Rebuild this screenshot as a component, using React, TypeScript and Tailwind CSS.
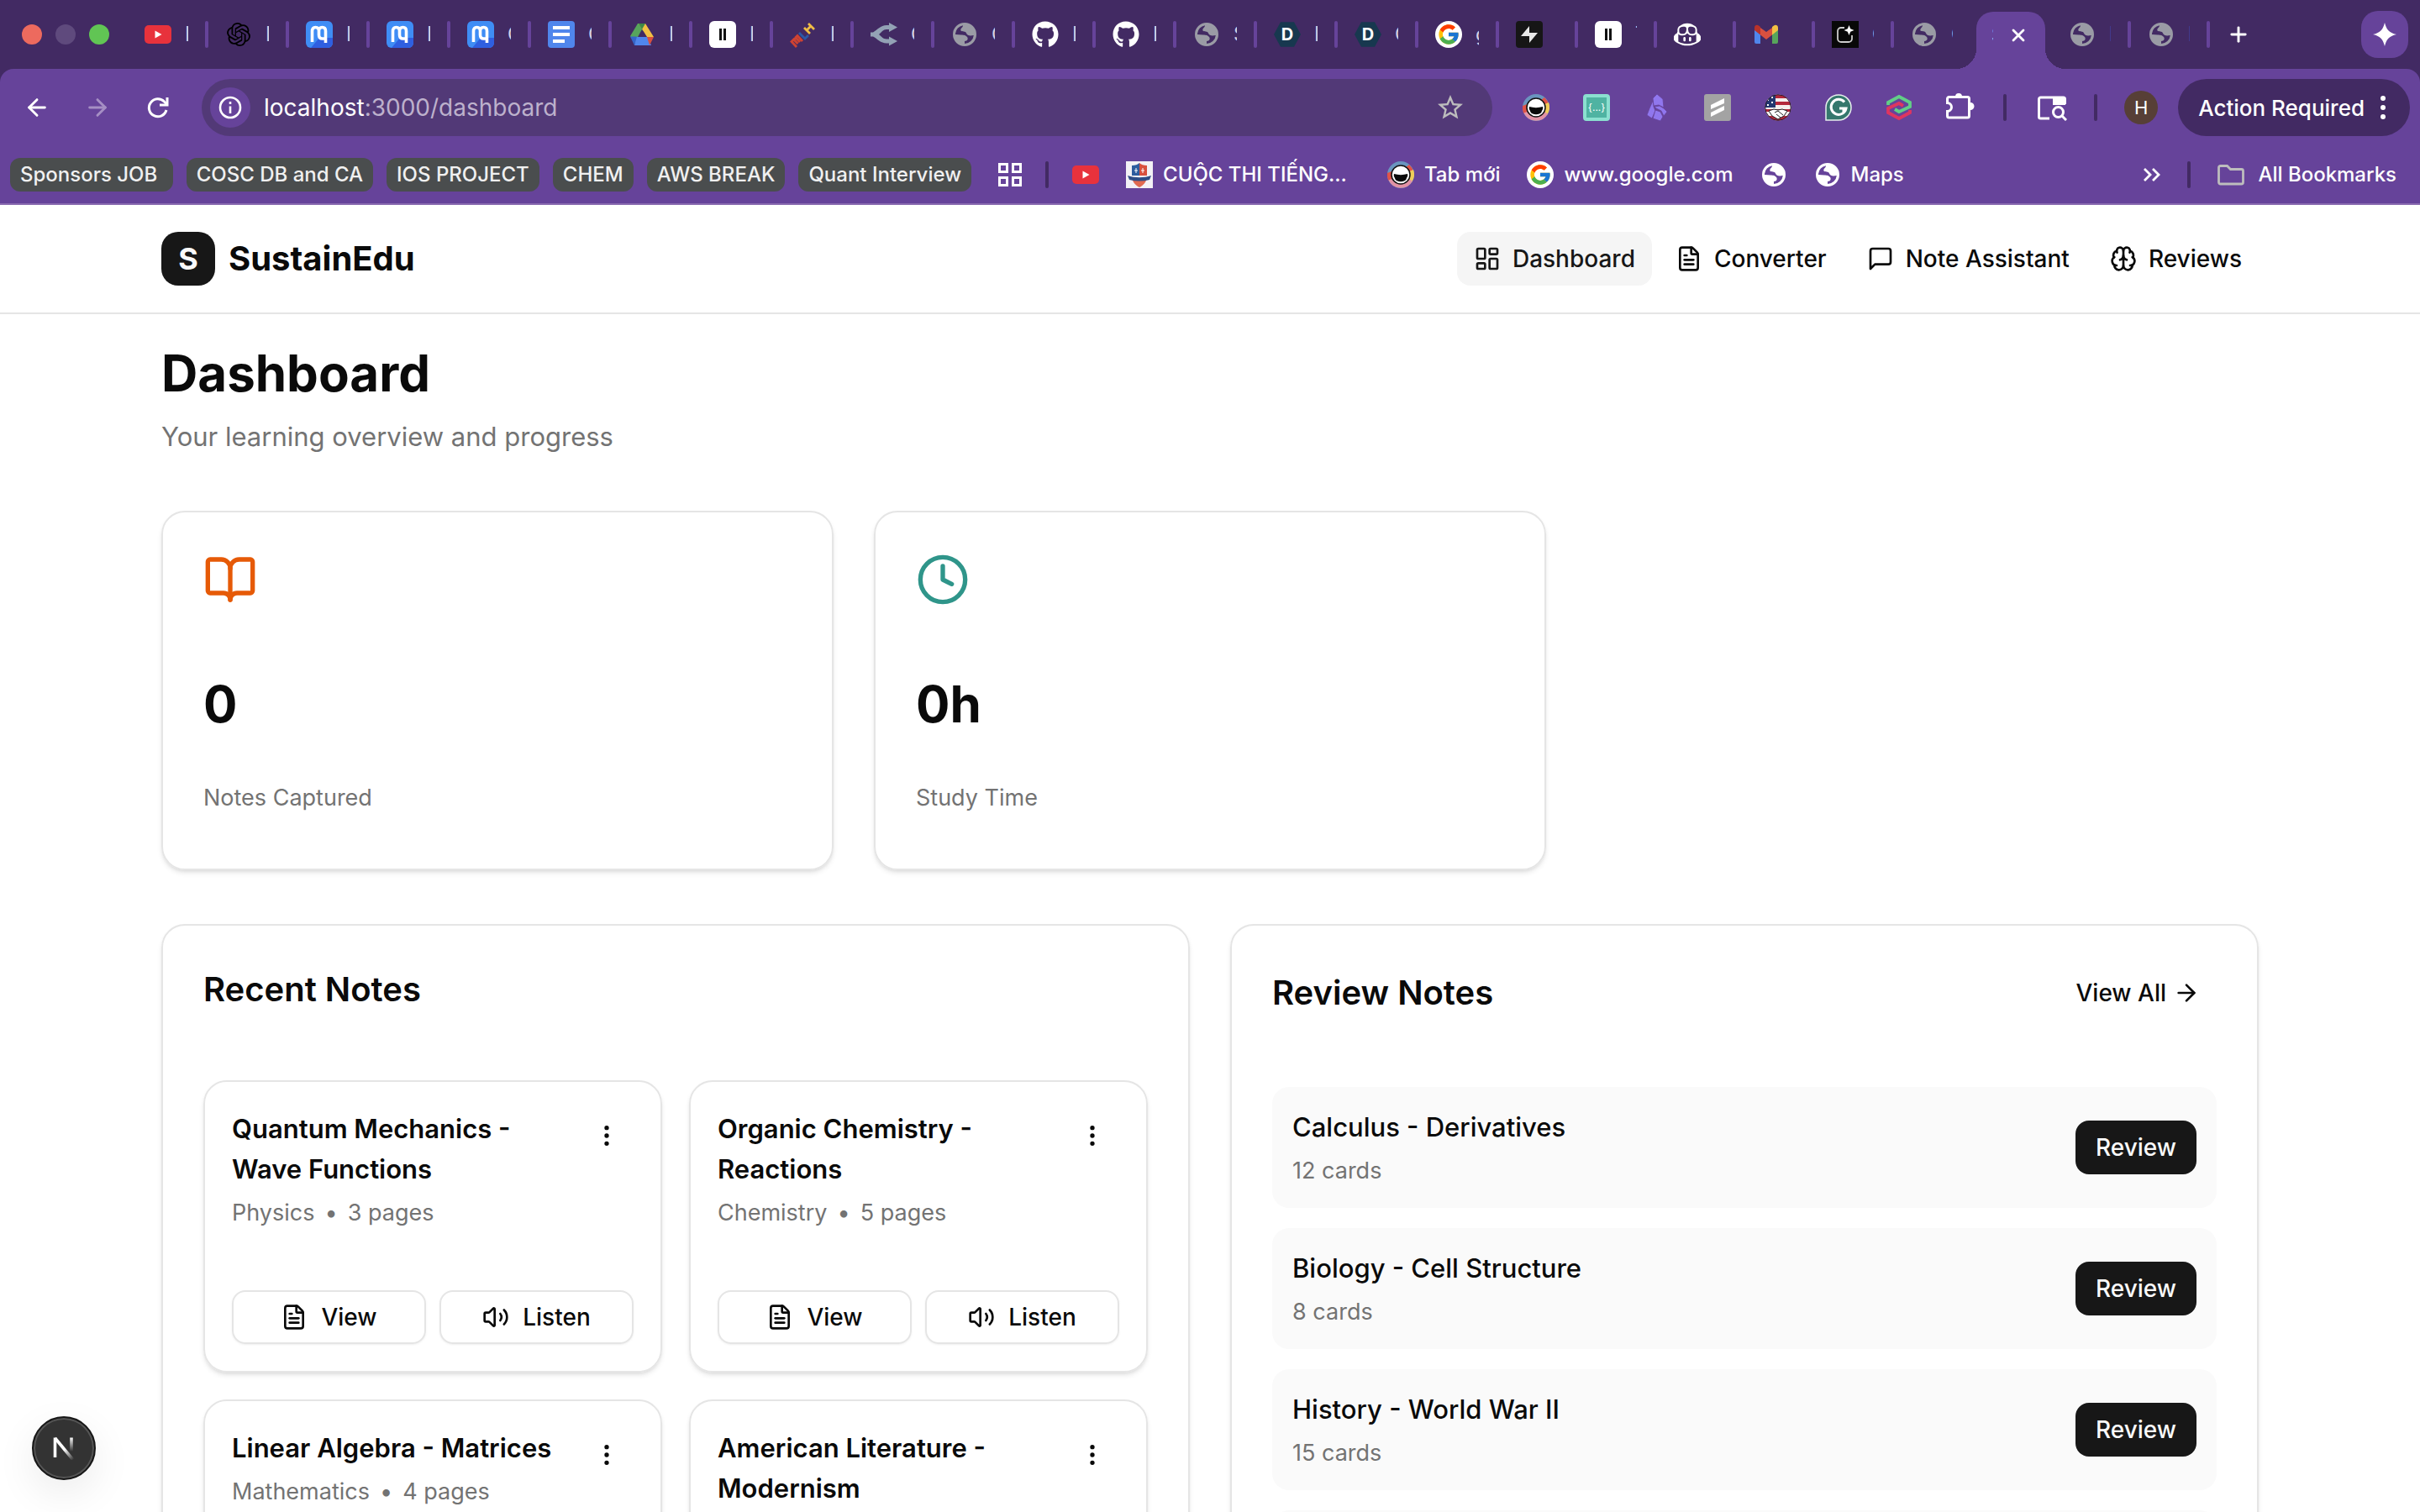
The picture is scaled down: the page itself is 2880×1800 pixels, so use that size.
import type { ReactNode } from 'react';
import {
  ArrowLeft,
  ArrowRight,
  BookOpen,
  Brain,
  Clock,
  EllipsisVertical,
  FileText,
  LayoutDashboard,
  Plus,
  Volume2,
  X,
} from 'lucide-react';
import { FaGithub } from 'react-icons/fa';
import { FcGoogle } from 'react-icons/fc';
import { MdStarBorder } from 'react-icons/md';
import { SiGithubcopilot, SiOpenai } from 'react-icons/si';

/* ---------- browser icons ---------- */

function YoutubeIcon() {
  return (
    <svg viewBox="0 0 32 32" className="size-8 shrink-0">
      <rect y="5" width="32" height="22" rx="5" fill="#e8323c" />
      <path d="M12.500 11.500v9l8-4.500z" fill="#fff" />
    </svg>
  );
}

function MonicaIcon() {
  return (
    <svg viewBox="0 0 32 32" className="size-8 shrink-0">
      <rect width="32" height="32" rx="6" fill="#3f8df5" />
      <path d="M6 32 16 20h16v6a6 6 0 0 1-6 6z" fill="#2f5fe0" />
      <path
        d="M7.500 25V12.500Q7.500 7.500 11.500 7.500T15.500 12V16.500Q15.500 21 19.500 21H23M15.500 12Q15.500 7.500 19.500 7.500T23.500 12V26"
        fill="none"
        stroke="#fff"
        strokeWidth="3.600"
      />
    </svg>
  );
}

function DocsIcon() {
  return (
    <svg viewBox="0 0 32 32" className="size-8 shrink-0">
      <rect width="32" height="32" rx="4" fill="#5086ec" />
      <path d="M6 6h20v4H6zM6 14h20v4H6zM6 22h14v4H6z" fill="#fff" />
    </svg>
  );
}

function DriveIcon() {
  return (
    <svg viewBox="0 0 32 32" className="size-8 shrink-0">
      <path d="M11 3h5l3 6-10 19-7-10z" fill="#57a55b" />
      <path d="M12 3h8l10 16h-8z" fill="#f2c043" />
      <path d="M12 3h8l-4 7z" fill="#3c8746" />
      <path d="M9 19h14l4 10H7z" fill="#5086ec" />
      <path d="M22 19h8l-5 10z" fill="#d9503f" />
      <path d="M2 18.500h8L7 29z" fill="#3566c9" />
      <path d="m16 10 5 9H11z" fill="#422a63" />
    </svg>
  );
}

function PauseIcon() {
  return (
    <svg viewBox="0 0 32 32" className="size-8 shrink-0">
      <rect width="32" height="32" rx="6" fill="#fff" />
      <path d="M12 9h3v14h-3zM17 9h3v14h-3z" fill="#111" />
    </svg>
  );
}

function MlhIcon() {
  return (
    <svg viewBox="0 0 32 32" className="size-8 shrink-0" fill="none" strokeWidth="2.800">
      <path d="m8 31-6-6.500 2.500-2.500 5 5m-3-7 2.500-2.500 6 6.500M5 22l2-2 5 5" stroke="#cf4332" />
      <path d="m11 14 7 7 4-4" stroke="#2b57a5" />
      <path d="m17 8 7 7m-2-12 7 7m-9 1 5-5" stroke="#f0bd45" />
    </svg>
  );
}

function ForkIcon() {
  return (
    <svg viewBox="0 0 32 32" className="size-8 shrink-0">
      <path
        d="M0 13.500h3c5-3 9-8.500 16-8.500h3V2l10 5.500-10 5.500V10h-3c-4 0-6 3.500-9 6 3 2.500 5 5.500 9 5.500h3v-3l10 5.500-10 5.500v-3h-3c-7 0-11-5.500-16-8H0z"
        fill="#93a2b5"
      />
    </svg>
  );
}

function GlobeIcon({ className = 'text-[#9a9ba5]' }: { className?: string }) {
  return (
    <svg viewBox="0 0 32 32" className={`size-8 shrink-0 ${className}`}>
      <path
        fill="currentColor"
        fillRule="evenodd"
        d="M16 2a14 14 0 1 0 0 28 14 14 0 0 0 0-28ZM5 15A11 11 0 0 1 14 5.200C14 8 10.500 8.500 11.500 11.500 13 13 17 11.500 18 14.500c1 3 4.500 3.500 8.800 2.500A11 11 0 0 1 16 27v-3c3.500 0 4.500-3 3-5-2-2.500-6-2.500-7-2.500L5 16Z"
      />
    </svg>
  );
}

function HexIcon() {
  return (
    <span className="flex size-8 shrink-0 items-center justify-center bg-[#17384f] text-xl font-bold text-white [clip-path:polygon(25%_4%,75%_4%,100%_50%,75%_96%,25%_96%,0_50%)]">
      D
    </span>
  );
}

function GoogleIcon() {
  return (
    <span className="flex size-8 shrink-0 items-center justify-center rounded-full bg-white">
      <FcGoogle className="size-7" />
    </span>
  );
}

function BoltIcon() {
  return (
    <svg viewBox="0 0 32 32" className="size-8 shrink-0">
      <rect width="32" height="32" rx="4" fill="#161616" />
      <path d="M16 6v8h10L16 26v-8H6z" fill="#e8e8e8" />
    </svg>
  );
}

function GmailIcon() {
  return (
    <svg viewBox="0 0 32 32" className="size-8 shrink-0">
      <path d="M2 10v15a2 2 0 0 0 2 2h5V14z" fill="#5086ec" />
      <path d="M30 10v15a2 2 0 0 1-2 2h-5V14z" fill="#57a55b" />
      <path d="M9 8l7 5 7-5v8.500L16 22l-7-5.500z" fill="#d9503f" />
      <path d="M2 8c0-3 3-4 5-2.500L9 7v9.500L2 11z" fill="#b8322a" />
      <path d="M30 8c0-3-3-4-5-2.500L23 7v9.500l7-5.500z" fill="#f2c043" />
    </svg>
  );
}

function SparkBoxIcon() {
  return (
    <svg viewBox="0 0 32 32" className="size-8 shrink-0">
      <path d="M0 0h32v32H0z" fill="#080808" />
      <path d="M15 8h-4a4 4 0 0 0-4 4v9a4 4 0 0 0 4 4h9a4 4 0 0 0 4-4v-4" fill="none" stroke="#ccc" strokeWidth="1.800" />
      <path d="m20.500 5 1.700 4.300 4.300 1.700-4.300 1.700-1.700 4.300-1.700-4.300-4.300-1.700 4.300-1.700z" fill="#fff" />
    </svg>
  );
}

function MaskIcon() {
  return (
    <svg viewBox="0 0 32 32" className="size-8 shrink-0">
      <circle cx="16" cy="16" r="16" fill="#6a95bf" />
      <path d="M26 4a16 16 0 0 1 5 8l-6 2-4-6z" fill="#e15347" />
      <path d="M31 10a16 16 0 0 1-2 15l-6-4 1-8z" fill="#f0cd5a" />
      <path d="M0 14a16 16 0 0 0 1.500 9L8 20v-9z" fill="#e15347" />
      <path d="M1.500 22.500a16 16 0 0 0 28.500 1l-7-4H9z" fill="#e292a5" />
      <circle cx="16" cy="16" r="11" fill="#fff" stroke="#111" strokeWidth="1.500" />
      <path d="M8 15c5 1.500 11 1.500 16 0 1 3-1 4-1.500 6.500-2 3.500-11 3.500-13 0C9 19 7 18 8 15z" fill="#0a0a0a" />
    </svg>
  );
}

function BracesIcon() {
  return (
    <span className="flex size-8 shrink-0 items-center justify-center rounded-sm border-4 border-[#8be0d0] bg-[#4fb3a2] text-xs text-white">
      {'{...}'}
    </span>
  );
}

function ObsidianIcon() {
  return (
    <svg viewBox="0 0 32 32" className="size-8 shrink-0" fill="#9077ee" stroke="#66439a" strokeWidth="0.800">
      <path d="m16 0 7 6 1 10-6-3-6 1-1-9z" />
      <path d="m11 8 1 7 2 5-4 9-6-4 3-8z" />
      <path d="m13 15 6-1 5 3 4 4-4 5-3-6-6-3z" />
      <path d="m14 19 6 2 3 6-3 5-9-3z" />
    </svg>
  );
}

function SlashIcon() {
  return (
    <svg viewBox="0 0 32 32" className="size-8 shrink-0">
      <rect width="32" height="32" rx="3" fill="#a3a3a3" />
      <path d="M8 13 24 5v6L8 18zM8 22l16-8v5L8 27z" fill="#fff" />
    </svg>
  );
}

function FlagIcon() {
  return (
    <svg viewBox="0 0 32 32" className="size-8 shrink-0">
      <clipPath id="flag-disc">
        <circle cx="16" cy="16" r="15.500" />
      </clipPath>
      <g clipPath="url(#flag-disc)">
        <path d="M0 0h32v32H0z" fill="#f4efef" />
        <path d="M12 1h20v4H12zM12 9h20v4H12zM0 18h32v3H0zM0 26h32v6H0z" fill="#b3273b" />
        <path d="M0 0h13v16H0z" fill="#23366f" />
        <path d="M3 6h2v2H3zM8 3h2v2H8zM8 9h2v2H8zM3 12h2v2H3z" fill="#fff" />
        <path d="m5 20 6-2 5 1 5-1 6 2-4 6-7 4-7-4z" fill="#fff" stroke="#222" />
        <path d="m12 22 4-2 6 5m-8-1 5 4" fill="none" stroke="#222" />
      </g>
      <circle cx="16" cy="16" r="15.300" fill="none" stroke="#2a1a2e" />
    </svg>
  );
}

function GrammarlyIcon() {
  return (
    <svg viewBox="0 0 32 32" className="size-8 shrink-0">
      <path d="M1 31V16A15 15 0 1 1 16 31z" fill="#35786d" stroke="#e8efee" strokeWidth="1.500" />
      <path d="M23 9.500A9 9 0 1 0 25 17h-8m5 0v4" fill="none" stroke="#fff" strokeWidth="3" />
    </svg>
  );
}

function LinkedHexIcon() {
  return (
    <svg viewBox="0 0 32 32" className="size-8 shrink-0" fill="none" strokeWidth="3.800">
      <path d="M3 13v-3l13-7 13 7v5l-13 6-5-3" stroke="#62cf87" />
      <path d="M29 19v3l-13 7-13-7v-5l13-6 5 3" stroke="#de3560" />
    </svg>
  );
}

function PuzzleIcon() {
  return (
    <svg viewBox="0 0 32 32" className="size-8 shrink-0 overflow-visible">
      <path d="M11 3a4 4 0 0 1 8 0zM29 10a4 4 0 0 1 0 9z" fill="#fff" />
      <path
        d="M3.500 3.500h22a2 2 0 0 1 2 2V26a2 2 0 0 1-2 2h-22a2 2 0 0 1-2-2v-5.500a5 5 0 0 0 0-10V5.500a2 2 0 0 1 2-2z"
        fill="none"
        stroke="#fff"
        strokeWidth="3"
      />
    </svg>
  );
}

function TabSearchIcon() {
  return (
    <svg viewBox="0 0 36 32" className="h-8 w-9 shrink-0">
      <path d="M15 29H4.500a2 2 0 0 1-2-2V6a2 2 0 0 1 2-2h27a2 2 0 0 1 2 2v6" fill="none" stroke="#fff" strokeWidth="3" />
      <path d="M19 4h15v9H19z" fill="#fff" />
      <circle cx="25.500" cy="21.500" r="6" fill="none" stroke="#fff" strokeWidth="3" />
      <path d="m30 26 5 5" stroke="#fff" strokeWidth="3" />
    </svg>
  );
}

function CrestIcon() {
  return (
    <svg viewBox="0 0 32 32" className="size-8 shrink-0">
      <path d="M0 0h32v32H0z" fill="#f3f1f5" />
      <path d="M7 5c4 0 7-1 9-3v15H7z" fill="#2d5c9e" />
      <path d="M25 5c-4 0-7-1-9-3v15h9z" fill="#d8503e" />
      <path d="M7 20h18c-1 5-5 9-9 11-4-2-8-6-9-11z" fill="#e06a50" />
      <path d="M2 17c9 3 19 3 28 0l-2 5c-8 2-16 2-24 0z" fill="#2f4d86" />
      <path d="M12 8v6m-2-3h4m6-3v6m-2-3h4" stroke="#fff" />
    </svg>
  );
}

function ReloadIcon() {
  return (
    <svg viewBox="0 0 32 32" className="size-8 shrink-0" fill="none" stroke="#fff" strokeWidth="3">
      <path d="M26 19A10.500 10.500 0 1 1 23.500 9l3 3" />
      <path d="M27 4v9h-9" />
    </svg>
  );
}

function GridIcon() {
  return (
    <svg viewBox="0 0 28 28" className="size-7 shrink-0" fill="none" stroke="#fff" strokeWidth="3">
      <path d="M1.500 1.500h9v9h-9zM17.500 1.500h9v9h-9zM1.500 17.500h9v9h-9zM17.500 17.500h9v9h-9z" />
    </svg>
  );
}

function FolderIcon() {
  return (
    <svg viewBox="0 0 32 32" className="size-8 shrink-0" fill="none" stroke="#bdbdbd" strokeWidth="2.800">
      <path d="M3.500 5.500h8l4 4h13a2 2 0 0 1 2 2V25a2 2 0 0 1-2 2h-25a2 2 0 0 1-2-2V7.500a2 2 0 0 1 2-2z" />
    </svg>
  );
}

function SparkleIcon() {
  return (
    <svg viewBox="0 0 28 28" className="size-7">
      <path d="M14 0c2 8 5 12 14 14-9 2-12 6-14 14-2-8-5-12-14-14 9-2 12-6 14-14z" fill="#fff" />
    </svg>
  );
}

/* ---------- browser chrome ---------- */

interface BrowserTab {
  icon: ReactNode;
  title: string;
}

const wideTabs: BrowserTab[] = [
  { icon: <YoutubeIcon />, title: 'I' },
  { icon: <SiOpenai className="mx-0.5 size-7 shrink-0 text-black" />, title: 'I' },
  { icon: <MonicaIcon />, title: 'I' },
  { icon: <MonicaIcon />, title: 'I' },
  { icon: <MonicaIcon />, title: 'C' },
  { icon: <DocsIcon />, title: 'C' },
  { icon: <DriveIcon />, title: 'I' },
  { icon: <PauseIcon />, title: 'I' },
  { icon: <MlhIcon />, title: 'I' },
  { icon: <ForkIcon />, title: 'C' },
  { icon: <GlobeIcon />, title: 'C' },
  { icon: <FaGithub className="size-8 shrink-0 text-white" />, title: 'I' },
  { icon: <FaGithub className="size-8 shrink-0 text-white" />, title: 'I' },
  { icon: <GlobeIcon />, title: 'S' },
  { icon: <HexIcon />, title: 'I' },
  { icon: <HexIcon />, title: 'C' },
  { icon: <GoogleIcon />, title: 'g' },
];

const narrowTabs: BrowserTab[] = [
  { icon: <BoltIcon />, title: '' },
  { icon: <PauseIcon />, title: 'T' },
  { icon: <SiGithubcopilot className="size-8 shrink-0 text-white" />, title: '' },
  { icon: <GmailIcon />, title: '' },
  { icon: <SparkBoxIcon />, title: 'C' },
];

const trailingTabs: BrowserTab[] = [
  { icon: <GlobeIcon />, title: 'I' },
  { icon: <GlobeIcon />, title: 'I' },
];

function TabItem({ tab, narrow = false }: { tab: BrowserTab; narrow?: boolean }) {
  return (
    <div className="flex shrink-0 items-center">
      {tab.icon}
      <span className={`ml-4 mr-5 h-8 overflow-hidden text-2xl leading-8 text-[#d9d1e3] ${narrow ? 'w-0.5' : 'w-1'}`}>
        {tab.title}
      </span>
      <span className="mr-5 h-8 w-1 rounded-sm bg-[#66439a]" />
    </div>
  );
}

function TabStrip() {
  return (
    <div className="flex h-[82px] items-center pl-[26px] pr-3.5">
      <div className="mr-[42px] flex shrink-0 gap-4">
        <span className="size-6 rounded-full bg-[#ed6a5e]" />
        <span className="size-6 rounded-full bg-[#5f4a7d]" />
        <span className="size-6 rounded-full bg-[#61c554]" />
      </div>
      {wideTabs.map((tab, i) => (
        <TabItem key={i} tab={tab} />
      ))}
      {narrowTabs.map((tab, i) => (
        <TabItem key={i} tab={tab} narrow />
      ))}
      <div className="flex shrink-0 items-center">
        <GlobeIcon />
        <span className="ml-4 mr-7 h-8 w-0.5 overflow-hidden text-2xl leading-8 text-[#d9d1e3]">C</span>
      </div>
      <div className="relative mr-7 flex h-[68px] shrink-0 items-center self-end rounded-t-[20px] bg-[#66439a] pb-3 pl-[18px] pr-5">
        <span className="absolute -left-6 bottom-0 size-6 bg-[radial-gradient(circle_at_0_0,transparent_24px,#66439a_24px)]" />
        <span className="absolute -right-6 bottom-0 size-6 bg-[radial-gradient(circle_at_100%_0,transparent_24px,#66439a_24px)]" />
        <span className="mr-[18px] h-8 w-0.5 overflow-hidden text-2xl leading-8 text-white">S</span>
        <button aria-label="Close tab">
          <X className="size-6 text-white" strokeWidth={2.8} />
        </button>
      </div>
      {trailingTabs.map((tab, i) => (
        <TabItem key={i} tab={tab} narrow />
      ))}
      <button aria-label="New tab">
        <Plus className="size-7 text-white" strokeWidth={2.5} />
      </button>
      <button aria-label="Gemini" className="ml-auto flex size-14 items-center justify-center rounded-[20px] bg-[#66439a]">
        <SparkleIcon />
      </button>
    </div>
  );
}

function Toolbar() {
  return (
    <div className="flex items-center pb-3 pl-7 pr-3 pt-3">
      <div className="flex shrink-0 items-center gap-10">
        <button aria-label="Back">
          <ArrowLeft className="size-8 text-white" strokeWidth={2.2} />
        </button>
        <button aria-label="Forward">
          <ArrowRight className="size-8 text-[#a58fc4]" strokeWidth={2.2} />
        </button>
        <button aria-label="Reload">
          <ReloadIcon />
        </button>
      </div>
      <div className="ml-9 flex h-[68px] flex-1 items-center rounded-full bg-[#523977] pl-2.5 pr-8">
        <span className="flex size-12 items-center justify-center rounded-full bg-[#66439a]">
          <svg viewBox="0 0 28 28" className="size-7" fill="none" stroke="#fff" strokeWidth="2.600">
            <circle cx="14" cy="14" r="12" />
            <path d="M14 12.500V21M14 7v3" />
          </svg>
        </span>
        <p className="ml-4 flex-1 text-[28px] leading-9 text-[#bdb1cc]">
          <span className="text-white">localhost</span>:3000/dashboard
        </p>
        <button aria-label="Bookmark this tab">
          <MdStarBorder className="size-9 text-[#bdbdbd]" />
        </button>
      </div>
      <div className="ml-9 flex shrink-0 items-center gap-10">
        <MaskIcon />
        <BracesIcon />
        <ObsidianIcon />
        <SlashIcon />
        <FlagIcon />
        <GrammarlyIcon />
        <LinkedHexIcon />
        <PuzzleIcon />
      </div>
      <span className="mx-9 h-8 w-1 rounded-sm bg-[#422a63]" />
      <TabSearchIcon />
      <span className="mx-8 h-8 w-1 rounded-sm bg-[#422a63]" />
      <span className="flex size-10 items-center justify-center rounded-full bg-[#573f37] text-[22px] text-white">H</span>
      <button className="ml-6 flex h-[68px] items-center gap-1.5 rounded-full bg-[#422a63] pl-6 pr-4 text-[26px] font-medium text-white">
        Action Required
        <svg viewBox="0 0 32 32" className="size-8" fill="#fff">
          <circle cx="16" cy="5" r="3" />
          <circle cx="16" cy="16" r="3" />
          <circle cx="16" cy="27" r="3" />
        </svg>
      </button>
    </div>
  );
}

const bookmarkGroups = ['Sponsors JOB ', 'COSC DB and CA', 'IOS PROJECT', 'CHEM', 'AWS BREAK', 'Quant Interview'];

function BookmarkBar() {
  return (
    <div className="flex h-[70px] items-center border-b-2 border-[#8a6bb0] pl-3 pr-7 text-2xl font-medium text-white">
      <div className="flex gap-4">
        {bookmarkGroups.map((group) => (
          <button key={group} className="h-10 whitespace-pre rounded-xl bg-[#4a4d4e] px-3 text-[#f0f0f0]">
            {group}
          </button>
        ))}
      </div>
      <button aria-label="Apps" className="ml-8">
        <GridIcon />
      </button>
      <span className="mx-7 h-8 w-1 rounded-sm bg-[#422a63]" />
      <div className="flex items-center gap-8">
        <YoutubeIcon />
        <a href="#" className="mr-4 flex items-center gap-3">
          <CrestIcon /> CUỘC THI TIẾNG...
        </a>
        <a href="#" className="flex items-center gap-3">
          <MaskIcon /> Tab mới
        </a>
        <a href="#" className="flex items-center gap-3">
          <GoogleIcon /> www.google.com
        </a>
        <GlobeIcon className="text-white" />
        <a href="#" className="flex items-center gap-3">
          <GlobeIcon className="text-white" /> Maps
        </a>
      </div>
      <button aria-label="More bookmarks" className="ml-auto">
        <svg viewBox="0 0 20 16" className="h-4 w-5" fill="none" stroke="#fff" strokeWidth="2.800">
          <path d="m1 1 7 7-7 7M11 1l7 7-7 7" />
        </svg>
      </button>
      <span className="mx-8 h-8 w-1 rounded-sm bg-[#422a63]" />
      <button className="flex items-center gap-4">
        <FolderIcon /> All Bookmarks
      </button>
    </div>
  );
}

/* ---------- dashboard ---------- */

function MessageIcon() {
  return (
    <svg
      viewBox="0 0 24 24"
      className="size-8"
      fill="none"
      stroke="currentColor"
      strokeWidth="2"
      strokeLinecap="round"
      strokeLinejoin="round"
    >
      <path d="M21 15a2 2 0 0 1-2 2H7l-4 4V5a2 2 0 0 1 2-2h14a2 2 0 0 1 2 2z" />
    </svg>
  );
}

const navItems = [
  { label: 'Dashboard', icon: <LayoutDashboard className="size-8" />, active: true },
  { label: 'Converter', icon: <FileText className="size-8" />, active: false },
  { label: 'Note Assistant', icon: <MessageIcon />, active: false },
  { label: 'Reviews', icon: <Brain className="size-8" />, active: false },
];

const stats = [
  { value: '0', label: 'Notes Captured', icon: <BookOpen className="size-16 text-[#e65a07]" /> },
  { value: '0h', label: 'Study Time', icon: <Clock className="size-16 text-[#2f958a]" /> },
];

const notes = [
  { title: 'Quantum Mechanics - Wave Functions', subject: 'Physics', pages: 3 },
  { title: 'Organic Chemistry - Reactions', subject: 'Chemistry', pages: 5 },
  { title: 'Linear Algebra - Matrices', subject: 'Mathematics', pages: 4 },
  { title: 'American Literature - Modernism', subject: 'Literature', pages: 6 },
];

const decks = [
  { title: 'Calculus - Derivatives', cards: 12 },
  { title: 'Biology - Cell Structure', cards: 8 },
  { title: 'History - World War II', cards: 15 },
  { title: 'Physics - Mechanics', cards: 10 },
];

function Header() {
  return (
    <header className="border-b-2 border-[#e5e5e5]">
      <div className="mx-auto flex h-32 max-w-[2560px] items-center justify-between px-8">
        <a href="#" className="flex items-center gap-4">
          <span className="flex size-16 items-center justify-center rounded-[20px] bg-[#171717] text-4xl font-bold text-[#fafafa]">
            S
          </span>
          <span className="text-[40px] font-bold leading-14">SustainEdu</span>
        </a>
        <nav className="flex gap-2">
          {navItems.map((item) => (
            <a
              key={item.label}
              href="#"
              className={`flex h-16 items-center gap-3.5 rounded-2xl px-5 text-[28px] font-medium ${item.active ? 'bg-neutral-100 text-[#171717]' : ''}`}
            >
              {item.icon}
              {item.label}
            </a>
          ))}
        </nav>
      </div>
    </header>
  );
}

function NoteCard({ note }: { note: (typeof notes)[number] }) {
  return (
    <article className="flex flex-col rounded-[28px] border-2 border-[#e5e5e5] p-8 shadow-md shadow-black/10">
      <div className="flex items-start justify-between">
        <div className="flex-1">
          <h3 className="text-[31px] font-semibold leading-12">{note.title}</h3>
          <p className="mt-2 flex gap-3 text-[27px] leading-10 text-[#737373]">
            <span>{note.subject}</span>
            <span>•</span>
            <span>{note.pages} pages</span>
          </p>
        </div>
        <button aria-label="Note options" className="flex size-16 items-center justify-center">
          <EllipsisVertical className="size-8" />
        </button>
      </div>
      <div className="mt-auto flex gap-4 pt-[72px] text-[28px] font-medium">
        <button className="flex h-16 flex-1 items-center justify-center gap-4 rounded-2xl border-2 border-[#e5e5e5] shadow-sm shadow-black/5">
          <FileText className="size-8" />
          View
        </button>
        <button className="flex h-16 flex-1 items-center justify-center gap-4 rounded-2xl border-2 border-[#e5e5e5] shadow-sm shadow-black/5">
          <Volume2 className="size-8" />
          Listen
        </button>
      </div>
    </article>
  );
}

function Dashboard() {
  return (
    <main className="mx-auto max-w-[2560px] px-8 pt-[34px]">
      <h1 className="text-6xl font-bold leading-18">Dashboard</h1>
      <p className="mt-4 text-[31px] leading-12 text-[#737373]">Your learning overview and progress</p>

      <section className="mt-16 grid grid-cols-3 gap-12">
        {stats.map((stat) => (
          <div key={stat.label} className="rounded-[28px] border-2 border-[#e5e5e5] px-12 pb-16 pt-12 shadow-md shadow-black/10">
            {stat.icon}
            <p className="mt-20 text-6xl font-bold leading-18">{stat.value}</p>
            <p className="mt-14 text-[27px] leading-10 text-[#737373]">{stat.label}</p>
          </div>
        ))}
      </section>

      <div className="mt-16 grid grid-cols-2 gap-12">
        <section className="rounded-[28px] border-2 border-[#e5e5e5] p-12 shadow-md shadow-black/10">
          <h2 className="text-[40px] font-semibold leading-14">Recent Notes</h2>
          <div className="mt-20 grid grid-cols-2 gap-8">
            {notes.map((note) => (
              <NoteCard key={note.title} note={note} />
            ))}
          </div>
        </section>

        <section className="rounded-[28px] border-2 border-[#e5e5e5] p-12 shadow-md shadow-black/10">
          <div className="flex h-16 items-center justify-between">
            <h2 className="text-[40px] font-semibold leading-14">Review Notes</h2>
            <a href="#" className="flex items-center gap-2 px-5 text-[28px] font-medium">
              View All
              <ArrowRight className="size-8" />
            </a>
          </div>
          <ul className="mt-20 flex flex-col gap-6">
            {decks.map((deck) => (
              <li key={deck.title} className="flex items-center justify-between rounded-[20px] bg-neutral-50 p-6">
                <div>
                  <h3 className="text-[31px] font-medium leading-12">{deck.title}</h3>
                  <p className="mt-2 text-[27px] leading-10 text-[#737373]">{deck.cards} cards</p>
                </div>
                <button className="h-16 rounded-2xl bg-[#171717] px-6 text-[28px] font-medium text-[#fafafa]">Review</button>
              </li>
            ))}
          </ul>
        </section>
      </div>
    </main>
  );
}

function DevBadge() {
  return (
    <button
      aria-label="Open Next.js Dev Tools"
      className="fixed bottom-[38px] left-[38px] flex size-[76px] items-center justify-center rounded-full border-2 border-[#171717] bg-[#333] shadow-[inset_0_0_0_2px_#555,0_16px_48px_rgba(0,0,0,0.08)]"
    >
      <svg viewBox="0 0 28 28" className="size-7" fill="none" strokeWidth="3.600">
        <defs>
          <linearGradient id="n-diagonal" x1="14" y1="16" x2="25" y2="28" gradientUnits="userSpaceOnUse">
            <stop stopColor="#fff" />
            <stop offset="1" stopColor="#fff" stopOpacity="0" />
          </linearGradient>
          <linearGradient id="n-stem" x1="23" y1="1" x2="23" y2="18" gradientUnits="userSpaceOnUse">
            <stop stopColor="#fff" />
            <stop offset="1" stopColor="#fff" stopOpacity="0" />
          </linearGradient>
        </defs>
        <path d="M3.500 25V1.500" stroke="#fff" />
        <path d="M3.500 2 25 28" stroke="url(#n-diagonal)" />
        <path d="M23 1.500V18" stroke="url(#n-stem)" />
      </svg>
    </button>
  );
}

export default function App() {
  return (
    <div className="flex h-screen flex-col overflow-hidden bg-white font-[Inter,'Liberation_Sans',sans-serif] text-[#0a0a0a]">
      <div className="shrink-0 bg-[#422a63]">
        <TabStrip />
        <div className="rounded-t-2xl bg-[#66439a]">
          <Toolbar />
          <BookmarkBar />
        </div>
      </div>
      <div className="min-h-0 flex-1 overflow-hidden">
        <Header />
        <Dashboard />
      </div>
      <DevBadge />
    </div>
  );
}
